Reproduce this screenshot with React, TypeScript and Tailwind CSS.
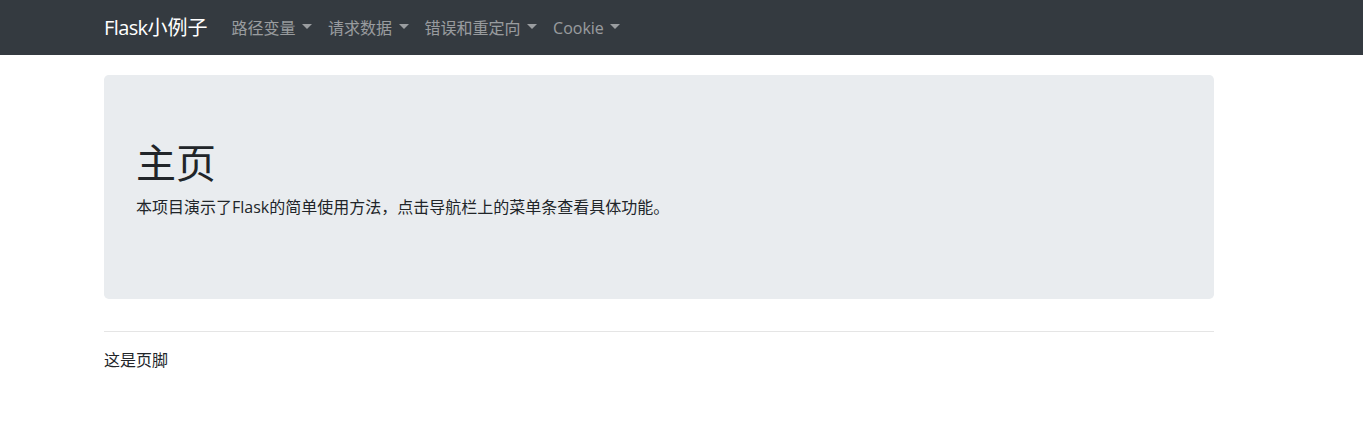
import React from "react";

const font = { fontFamily: '"Open Sans", "Noto Sans CJK SC", sans-serif' };

function NavItem({ label }: { label: string }) {
  return (
    <a className="flex items-center px-2 py-2 text-[16px] leading-6 text-[rgba(255,255,255,0.5)]">
      <span>{label}</span>
      <span className="ml-[6.5px] inline-block h-0 w-0 border-x-[5px] border-t-[5px] border-x-transparent border-t-[rgba(255,255,255,0.5)] -translate-y-[1px]" />
    </a>
  );
}

export default function App() {
  return (
    <div className="min-h-[432px] bg-white text-[#212529]" style={font}>
      <nav className="flex h-[55px] items-center bg-[#343a40]">
        <div className="ml-[104px] flex w-[1110px] items-center">
          <a className="mr-4 py-[5px] text-[20px] leading-[30px] text-white">
            <span className="tracking-[-0.6px]">Flask</span>小例子
          </a>
          <div className="flex items-center">
            <NavItem label="路径变量" />
            <NavItem label="请求数据" />
            <NavItem label="错误和重定向" />
            <NavItem label="Cookie" />
          </div>
        </div>
      </nav>
      <div className="ml-[104px] w-[1110px]">
        <div className="mt-5 mb-8 rounded-[4.8px] bg-[#e9ecef] px-8 py-16">
          <h1 className="mb-2 text-[40px] font-normal leading-[48px]">主页</h1>
          <p className="mb-4 text-[16px] leading-6">本项目演示了Flask的简单使用方法，点击导航栏上的菜单条查看具体功能。</p>
        </div>
        <hr className="my-4 border-0 border-t border-t-[rgba(0,0,0,0.1)]" />
        <p className="text-[16px] leading-6">这是页脚</p>
      </div>
    </div>
  );
}
